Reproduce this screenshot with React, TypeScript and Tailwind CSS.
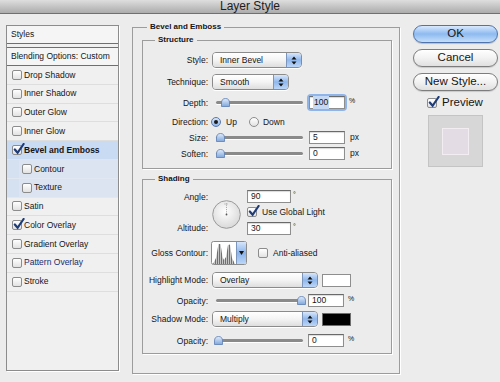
import React from "react";

const Check = ({ checked = false }: { checked?: boolean }) => (
  <span className="relative block w-[10px] h-[10px] shrink-0 rounded-[2px] border border-[#8c8c8c] bg-gradient-to-b from-white to-[#e2e2e2]">
    {checked && (
      <svg className="absolute left-[0px] top-[-3px]" width="12" height="12" viewBox="0 0 12 12">
        <path d="M1.8 6.5 L4.6 9.8 L10.6 1" stroke="#1e3c78" strokeWidth="2.2" fill="none" strokeLinecap="round" />
      </svg>
    )}
  </span>
);

const Radio = ({ on = false }: { on?: boolean }) => (
  <span
    className={
      on
        ? "w-[10px] h-[10px] shrink-0 rounded-full border border-[#5b78a8] bg-gradient-to-b from-[#d7e6fa] to-[#8fb6ea] flex items-center justify-center"
        : "block w-[10px] h-[10px] shrink-0 rounded-full border border-[#8c8c8c] bg-gradient-to-b from-white to-[#e2e2e2]"
    }
  >
    {on && <span className="w-[4px] h-[4px] rounded-full bg-[#1a1a1a]" />}
  </span>
);

const Arrows = () => (
  <svg width="6" height="9" viewBox="0 0 6 9">
    <path d="M3 0.5 L5.5 3.5 L0.5 3.5 Z M3 8.5 L5.5 5.5 L0.5 5.5 Z" fill="#111" />
  </svg>
);

const Popup = ({ text, w }: { text: string; w: string }) => (
  <div className={`${w} h-[16px] ml-[4px] flex rounded-[4px] border border-[#8b8b8b] overflow-hidden shadow-[0_1px_0_#fff]`}>
    <div className="flex-1 flex items-center pl-[7px] bg-gradient-to-b from-white via-[#f4f4f4] to-[#dedede] text-[8.5px]">
      {text}
    </div>
    <div className="w-[15px] flex items-center justify-center border-l border-[#7c95bd] bg-gradient-to-b from-[#d9e7fa] via-[#8fb7ec] to-[#bcd6f7]">
      <Arrows />
    </div>
  </div>
);

const Slider = ({ pos }: { pos: number }) => (
  <div className="relative w-[92px] h-[10px] ml-[4px] flex items-center">
    <div className="ml-[4px] w-[87px] h-[3px] rounded-full bg-[#8a8a8a] shadow-[0_1px_0_#fff]" />
    <svg className="absolute top-[0px]" style={{ left: pos }} width="9" height="9" viewBox="0 0 9 9">
      <defs>
        <linearGradient id="th" x1="0" y1="0" x2="0" y2="1">
          <stop offset="0" stopColor="#e3eefc" />
          <stop offset="1" stopColor="#7fa6dc" />
        </linearGradient>
      </defs>
      <path d="M0.5 8.5 L0.5 5 Q0.5 0.5 4.5 0.5 Q8.5 0.5 8.5 5 L8.5 8.5 Z" fill="url(#th)" stroke="#5c7eb2" strokeWidth="0.8" />
    </svg>
  </div>
);

const Field = ({ v, w, focus = false }: { v: string; w: string; focus?: boolean }) => (
  <div
    className={`${w} h-[13px] flex items-center pl-[3px] bg-white border border-[#8e8e8e] border-t-[#6a6a6a] shadow-[inset_0_1px_1px_rgba(0,0,0,0.15)] text-[8.5px]`}
  >
    <span className={focus ? "bg-[#c5d9f5] px-[1px]" : ""}>{v}</span>
  </div>
);

const Label = ({ t }: { t: string }) => (
  <span className="w-[65px] shrink-0 text-right text-[8.5px] leading-[10px]">{t}</span>
);

const Contour = () => (
  <svg width="36" height="24" viewBox="0 0 36 24" className="ml-[3px]">
    <defs>
      <pattern id="st" width="2" height="2" patternUnits="userSpaceOnUse">
        <rect width="1.2" height="2" fill="#6f6f6f" />
        <rect x="1.2" width="0.8" height="2" fill="#bdbdbd" />
      </pattern>
      <linearGradient id="bl" x1="0" y1="0" x2="0" y2="1">
        <stop offset="0" stopColor="#d6e6fb" />
        <stop offset="0.5" stopColor="#8ab4ec" />
        <stop offset="1" stopColor="#bcd6f7" />
      </linearGradient>
    </defs>
    <rect x="0.5" y="0.5" width="35" height="23" rx="2" fill="#fff" stroke="#8b8b8b" />
    <path d="M2 23 L5 17 L7.5 3 L9.5 3 L11.5 16 L13 19 L15 16 L17 4 L19 3.5 L21 17 L24 23 Z" fill="url(#st)" />
    <rect x="26" y="1" width="9" height="22" fill="url(#bl)" />
    <line x1="25.5" y1="1" x2="25.5" y2="23" stroke="#7c95bd" />
    <path d="M28 10 L33 10 L30.5 14 Z" fill="#111" />
  </svg>
);

const AngleDial = () => (
  <svg width="29" height="29" viewBox="0 0 29 29" className="ml-[4px] mt-[10px] shrink-0">
    <defs>
      <radialGradient id="dl" cx="0.45" cy="0.4" r="0.6">
        <stop offset="0" stopColor="#ffffff" />
        <stop offset="1" stopColor="#d9d9d9" />
      </radialGradient>
    </defs>
    <circle cx="14.5" cy="14.5" r="13.8" fill="url(#dl)" stroke="#9a9a9a" />
    <line x1="14.5" y1="14.5" x2="14.5" y2="3" stroke="#8a8a8a" strokeWidth="0.8" strokeDasharray="1 1.2" />
    <line x1="12.5" y1="4" x2="16.5" y2="4" stroke="#8a8a8a" strokeWidth="0.8" strokeDasharray="1 1" />
    <circle cx="14.5" cy="14.5" r="0.9" fill="#555" />
  </svg>
);

const sideRows: { t: string; on?: boolean; sel?: boolean; sub?: boolean }[] = [
  { t: "Drop Shadow" },
  { t: "Inner Shadow" },
  { t: "Outer Glow" },
  { t: "Inner Glow" },
  { t: "Bevel and Emboss", on: true, sel: true },
  { t: "Contour", sub: true },
  { t: "Texture", sub: true },
  { t: "Satin" },
  { t: "Color Overlay", on: true },
  { t: "Gradient Overlay" },
  { t: "Pattern Overlay" },
  { t: "Stroke" },
];

const Btn = ({ t, blue = false }: { t: string; blue?: boolean }) => (
  <div
    className={
      blue
        ? "h-[18px] rounded-full border border-[#4f74ad] bg-gradient-to-b from-[#d9e9fd] via-[#8dbaf0] to-[#c6defa] flex items-center justify-center text-[11.5px] shadow-[0_1px_1px_rgba(0,0,0,0.2)]"
        : "h-[18px] rounded-full border border-[#7d7d7d] bg-gradient-to-b from-white via-[#f2f2f2] to-[#e0e0e0] flex items-center justify-center text-[11.5px] shadow-[0_1px_1px_rgba(0,0,0,0.15)]"
    }
  >
    {t}
  </div>
);

export default function App() {
  return (
    <div className="w-[500px] h-[382px] overflow-hidden bg-[#ececec] text-[#151515] font-['Liberation_Sans',Arial,sans-serif]">
      <div className="h-[14px] border-b border-[#707070] bg-gradient-to-b from-[#dedede] to-[#acacac] flex items-center justify-center text-[12px] leading-[13px] text-[#1d1d1d]">
        Layer Style
      </div>

      <div className="flex">
        {/* styles list */}
        <div className="ml-[6px] mt-[11px] w-[113px] h-[346px] border border-[#8c8c8c] bg-[#f0f0f0] shadow-[1px_1px_0_#fff] text-[8.5px]">
          <div className="h-[18px] flex items-center pl-[4px] border-b border-[#6f6f6f] bg-[#f5f5f5]">Styles</div>
          <div className="h-[3px]" />
          <div className="h-[19px] flex items-center pl-[4px] border-y border-[#6f6f6f] bg-[#f5f5f5]">
            Blending Options: Custom
          </div>
          {sideRows.map((r) => (
            <div
              key={r.t}
              className={
                r.sel
                  ? "h-[18.8px] flex items-center gap-[2px] pl-[5px] bg-[#c9daf3] border-b border-[#dde5ef] font-bold"
                  : r.sub
                  ? "h-[18.8px] flex bg-[#d5e0f0] border-b border-[#e2e8f1]"
                  : "h-[18.8px] flex items-center gap-[2px] pl-[5px] border-b border-[#dedede]"
              }
            >
              {r.sub ? (
                <div className="ml-[12px] flex-1 flex items-center gap-[2px] pl-[3px] bg-[#dbe4f0]">
                  <Check />
                  <span>{r.t}</span>
                </div>
              ) : (
                <>
                  <Check checked={r.on} />
                  <span className={r.t === "Pattern Overlay" ? "text-[#1b2a6b]" : ""}>{r.t}</span>
                </>
              )}
            </div>
          ))}
        </div>

        {/* main group */}
        <fieldset className="ml-[13px] mt-[8px] w-[268px] h-[352px] pl-[9px] border border-[#9c9c9c] shadow-[1px_1px_0_#fff]">
          <legend className="ml-[5px] px-[3px] text-[8px] font-bold leading-[10px]">Bevel and Emboss</legend>

          <fieldset className="mt-[3px] w-[250px] h-[134px] border border-[#9c9c9c] shadow-[1px_1px_0_#fff]">
            <legend className="ml-[12px] px-[3px] text-[8px] font-bold leading-[10px]">Structure</legend>
            <div className="mt-[7px] h-[16px] flex items-center">
              <Label t="Style:" />
              <Popup text="Inner Bevel" w="w-[90px]" />
            </div>
            <div className="mt-[6px] h-[16px] flex items-center">
              <Label t="Technique:" />
              <Popup text="Smooth" w="w-[77px]" />
            </div>
            <div className="mt-[6px] h-[13px] flex items-center text-[8.5px]">
              <Label t="Depth:" />
              <Slider pos={9} />
              <div className="ml-[5px] rounded-[2px] shadow-[0_0_0_2px_#8fb4ea]">
                <Field v="100" w="w-[36px]" focus />
              </div>
              <span className="ml-[4px] self-start text-[7px]">%</span>
            </div>
            <div className="mt-[7px] h-[12px] flex items-center text-[8.5px]">
              <Label t="Direction:" />
              <span className="ml-[3px]"><Radio on /></span>
              <span className="ml-[5px]">Up</span>
              <span className="ml-[12px]"><Radio /></span>
              <span className="ml-[4px]">Down</span>
            </div>
            <div className="mt-[3px] h-[13px] flex items-center text-[8.5px]">
              <Label t="Size:" />
              <Slider pos={4} />
              <span className="ml-[5px]"><Field v="5" w="w-[36px]" /></span>
              <span className="ml-[5px]">px</span>
            </div>
            <div className="mt-[3px] h-[13px] flex items-center text-[8.5px]">
              <Label t="Soften:" />
              <Slider pos={4} />
              <span className="ml-[5px]"><Field v="0" w="w-[36px]" /></span>
              <span className="ml-[5px]">px</span>
            </div>
          </fieldset>

          <fieldset className="mt-[5px] w-[250px] h-[180px] border border-[#9c9c9c] shadow-[1px_1px_0_#fff]">
            <legend className="ml-[12px] px-[3px] text-[8px] font-bold leading-[10px]">Shading</legend>
            <div className="mt-[6px] h-[46px] flex text-[8.5px]">
              <div className="w-[65px] flex flex-col">
                <span className="mt-[2px] text-right leading-[10px]">Angle:</span>
                <span className="mt-auto mb-[3px] text-right leading-[10px]">Altitude:</span>
              </div>
              <AngleDial />
              <div className="ml-[6px] flex flex-col">
                <div className="flex items-start">
                  <Field v="90" w="w-[44px]" />
                  <span className="ml-[2px] text-[7px]">°</span>
                </div>
                <div className="mt-[3px] h-[12px] flex items-center">
                  <Check checked />
                  <span className="ml-[5px]">Use Global Light</span>
                </div>
                <div className="mt-[4px] flex items-start">
                  <Field v="30" w="w-[44px]" />
                  <span className="ml-[2px] text-[7px]">°</span>
                </div>
              </div>
            </div>
            <div className="mt-[5px] h-[24px] flex items-center text-[8.5px]">
              <Label t="Gloss Contour:" />
              <Contour />
              <span className="ml-[11px]"><Check /></span>
              <span className="ml-[5px]">Anti-aliased</span>
            </div>
            <div className="mt-[7px] h-[16px] flex items-center">
              <Label t="Highlight Mode:" />
              <Popup text="Overlay" w="w-[106px]" />
              <div className="ml-[4px] w-[29px] h-[13px] bg-white border border-[#8e8e8e]" />
            </div>
            <div className="mt-[6px] h-[13px] flex items-center text-[8.5px]">
              <Label t="Opacity:" />
              <Slider pos={85} />
              <span className="ml-[4px]"><Field v="100" w="w-[36px]" /></span>
              <span className="ml-[4px] self-start text-[7px]">%</span>
            </div>
            <div className="mt-[4px] h-[16px] flex items-center">
              <Label t="Shadow Mode:" />
              <Popup text="Multiply" w="w-[106px]" />
              <div className="ml-[4px] w-[29px] h-[13px] bg-black border border-[#6e6e6e]" />
            </div>
            <div className="mt-[7px] h-[13px] flex items-center text-[8.5px]">
              <Label t="Opacity:" />
              <Slider pos={2} />
              <span className="ml-[4px]"><Field v="0" w="w-[36px]" /></span>
              <span className="ml-[4px] self-start text-[7px]">%</span>
            </div>
          </fieldset>
        </fieldset>

        {/* buttons */}
        <div className="ml-[13px] mt-[11px] w-[85px] flex flex-col">
          <Btn t="OK" blue />
          <div className="mt-[6px]"><Btn t="Cancel" /></div>
          <div className="mt-[6px]"><Btn t="New Style..." /></div>
          <div className="mt-[6px] h-[12px] pl-[14px] flex items-center">
            <Check checked />
            <span className="ml-[5px] text-[11.5px]">Preview</span>
          </div>
          <div className="mt-[6px] ml-[15px] w-[55px] h-[52px] bg-[#d7d7d7] border border-[#c4c4c4] flex items-center justify-center">
            <div className="w-[27px] h-[27px] bg-[#e3dce5] border border-[#f1edf1]" />
          </div>
        </div>
      </div>
    </div>
  );
}
